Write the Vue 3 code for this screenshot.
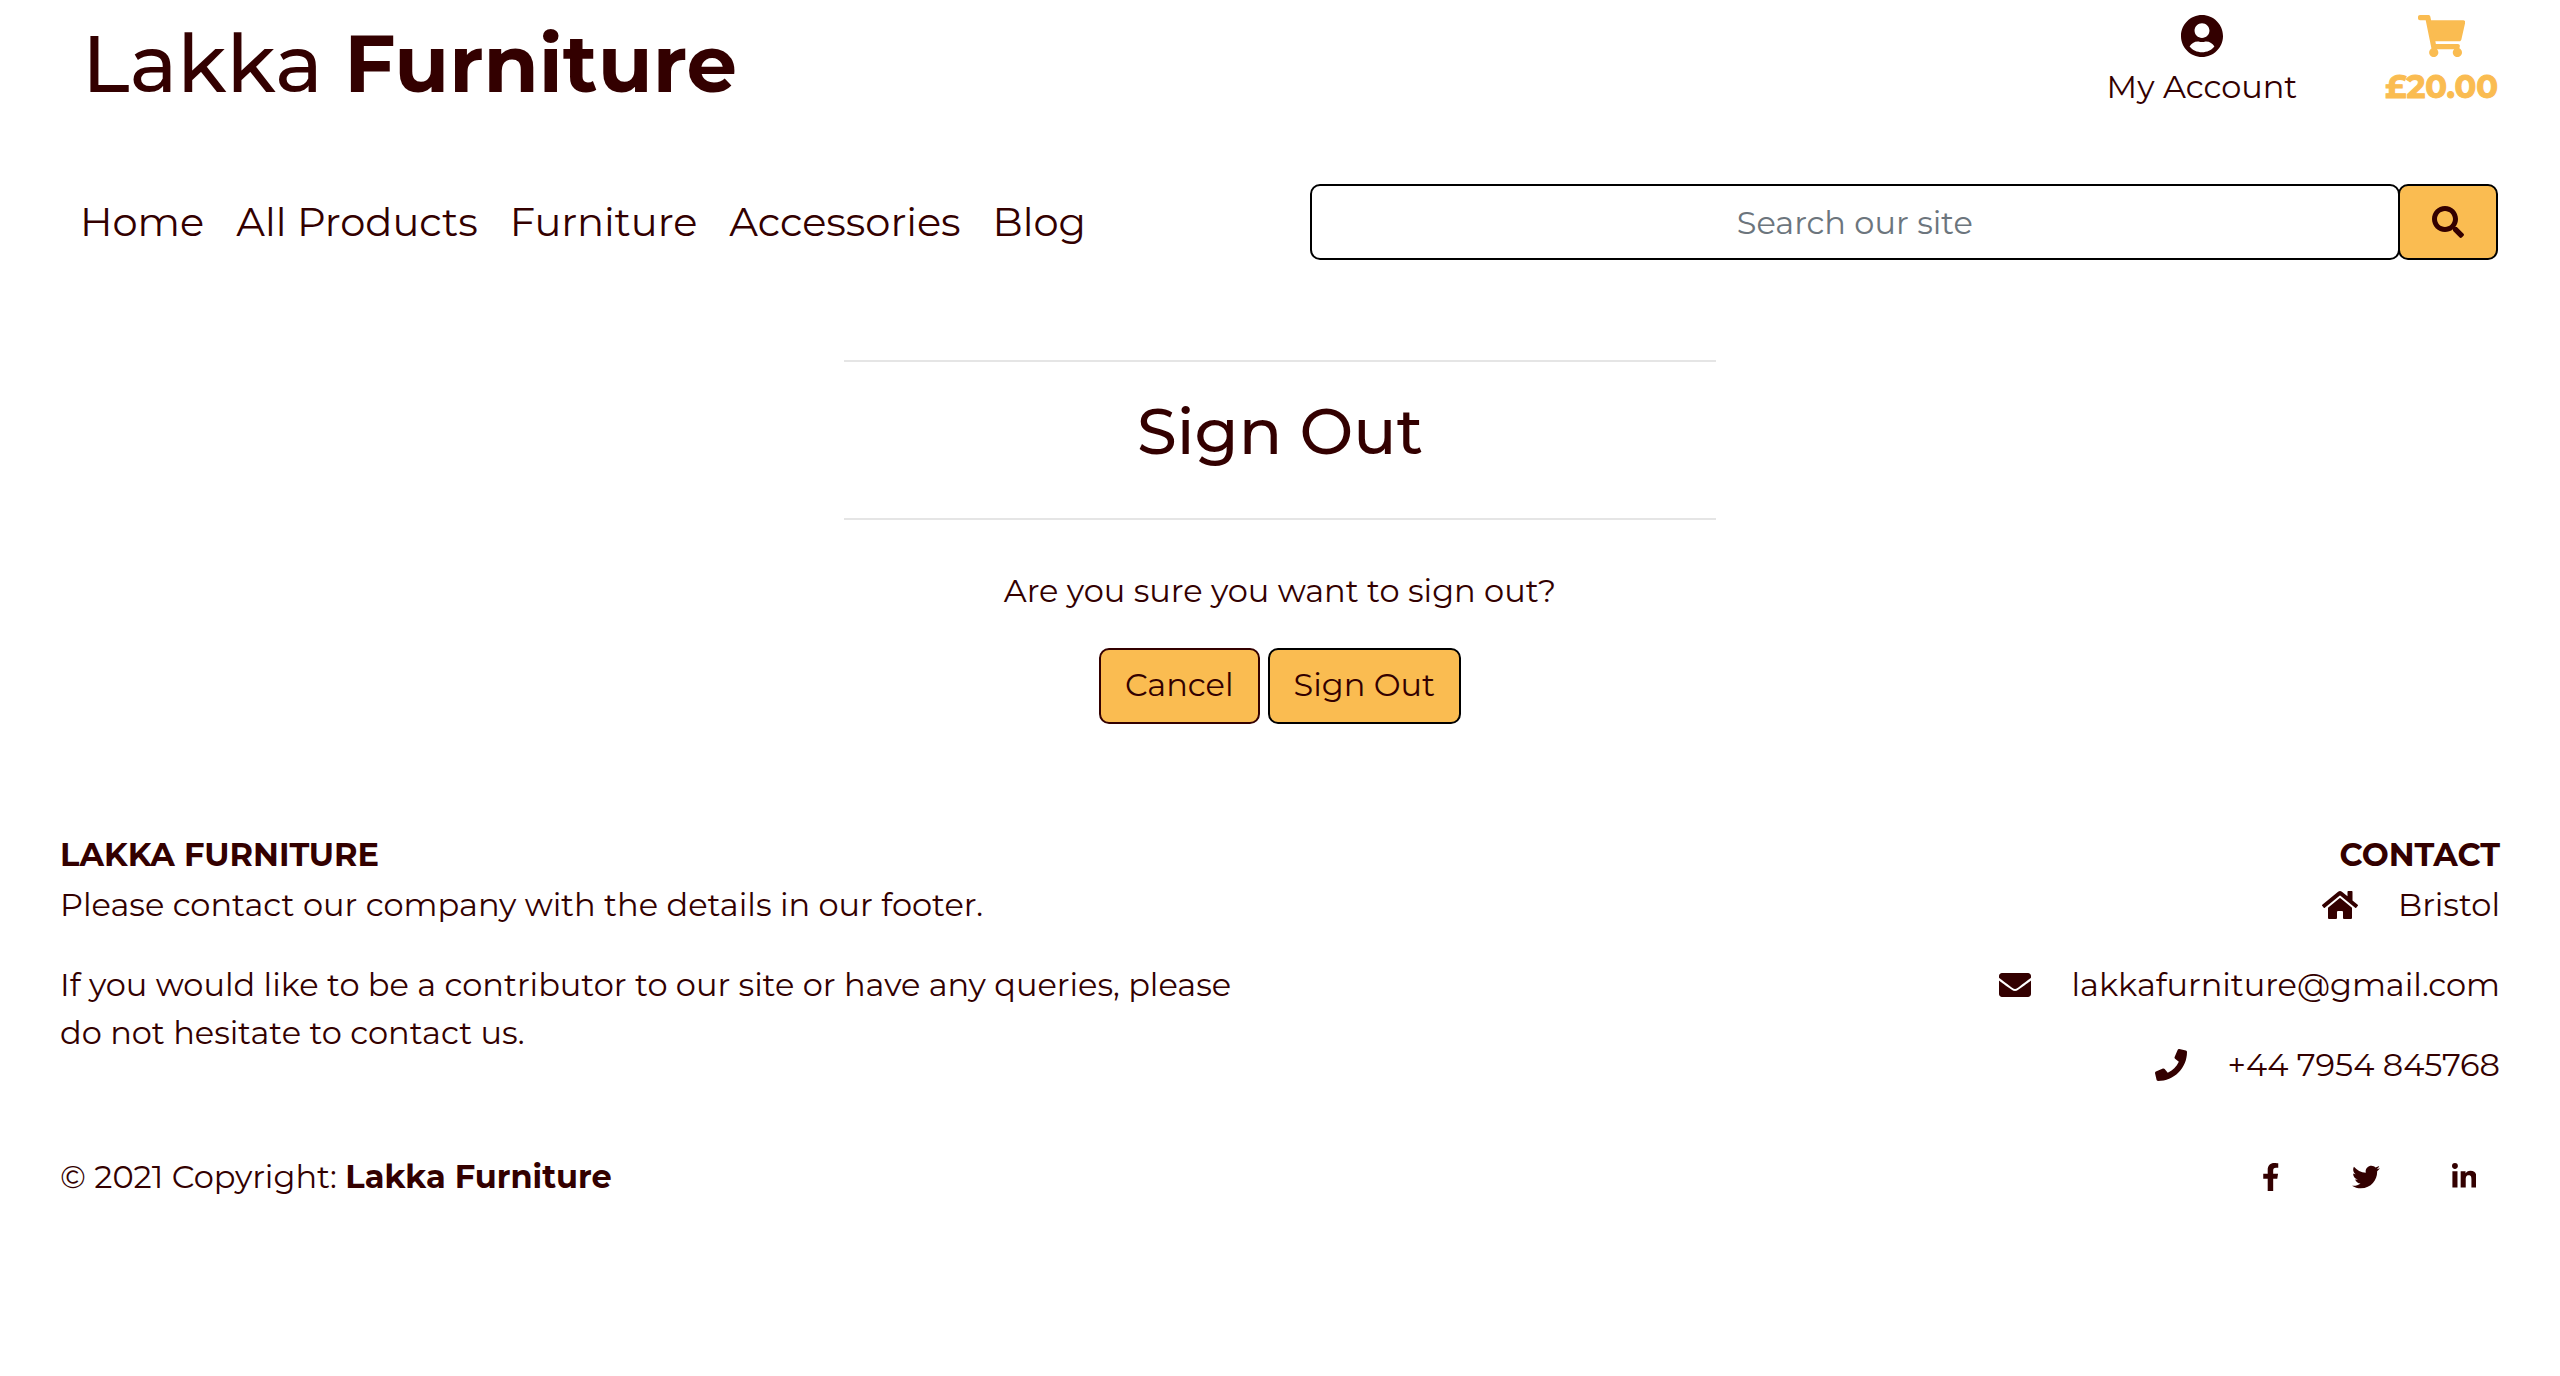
<script setup>
const navLinks = ['Home', 'All Products', 'Furniture', 'Accessories', 'Blog']

const contacts = [
  {
    name: 'home',
    text: 'Bristol',
    box: '0 0 576 512',
    path: 'M280.4 148.3L96 300.1V464a16 16 0 0 0 16 16l112.100-.3a16 16 0 0 0 15.900-16V368a16 16 0 0 1 16-16h64a16 16 0 0 1 16 16v95.600a16 16 0 0 0 16 16.100L464 480a16 16 0 0 0 16-16V300L295.700 148.300a12.200 12.200 0 0 0-15.300 0zM571.600 251.500L488 182.600V44.100a12 12 0 0 0-12-12h-56a12 12 0 0 0-12 12v72.600L318.500 43a48 48 0 0 0-61 0L4.300 251.500a12 12 0 0 0-1.600 16.900l25.500 31a12 12 0 0 0 16.900 1.600l235.200-193.700a12.200 12.200 0 0 1 15.300 0L530.900 301a12 12 0 0 0 16.900-1.600l25.500-31a12 12 0 0 0-1.700-16.900z'
  },
  {
    name: 'envelope',
    text: 'lakkafurniture@gmail.com',
    box: '0 0 512 512',
    path: 'M502.3 190.800c3.900-3.100 9.700-.2 9.700 4.700V400c0 26.500-21.500 48-48 48H48c-26.500 0-48-21.500-48-48V195.600c0-5 5.700-7.800 9.700-4.700 22.400 17.400 52.100 39.500 154.100 113.600 21.100 15.400 56.700 47.800 92.200 47.600 35.700.3 72-32.800 92.300-47.600 102-74.100 131.600-96.300 154-113.700zM256 320c23.200.4 56.600-29.200 73.400-41.400 132.700-96.300 142.800-104.700 173.400-128.700 5.800-4.500 9.200-11.500 9.200-18.900v-19c0-26.500-21.500-48-48-48H48c-26.500 0-48 21.500-48 48v19c0 7.400 3.400 14.300 9.200 18.900 30.600 23.900 40.700 32.400 173.400 128.700 16.800 12.200 50.200 41.800 73.400 41.400z'
  },
  {
    name: 'phone',
    text: '+44 7954 845768',
    box: '0 0 512 512',
    path: 'M493.400 24.600l-104-24c-11.300-2.600-22.900 3.300-27.500 13.900l-48 112c-4.200 9.800-1.400 21.300 6.900 28l60.600 49.600c-36 76.700-98.900 140.500-177.200 177.200l-49.600-60.600c-6.800-8.300-18.200-11.100-28-6.900l-112 48C3.900 366.500-2 378.100.6 389.400l24 104C27.100 504.200 36.700 512 48 512c256.100 0 464-207.500 464-464 0-11.200-7.700-20.900-18.600-23.400z'
  }
]

const socials = [
  {
    name: 'Facebook',
    box: '0 0 320 512',
    path: 'M279.140 288l14.220-92.660h-88.910v-60.130c0-25.350 12.420-50.060 52.240-50.060h40.420V6.260S260.430 0 225.360 0c-73.220 0-121.080 44.380-121.080 124.720v70.620H22.890V288h81.390v224h100.170V288z'
  },
  {
    name: 'Twitter',
    box: '0 0 512 512',
    path: 'M459.370 151.716c.325 4.548.325 9.097.325 13.645 0 138.720-105.583 298.558-298.558 298.558-59.452 0-114.680-17.219-161.137-47.106 8.447.974 16.568 1.299 25.340 1.299 49.055 0 94.213-16.568 130.274-44.832-46.132-.975-84.792-31.188-98.112-72.772 6.498.974 12.995 1.624 19.818 1.624 9.421 0 18.843-1.300 27.614-3.573-48.081-9.747-84.143-51.980-84.143-102.985v-1.299c13.969 7.797 30.214 12.670 47.431 13.319-28.264-18.843-46.781-51.005-46.781-87.391 0-19.492 5.197-37.360 14.294-52.954 51.655 63.675 129.300 105.258 216.365 109.807-1.624-7.797-2.599-15.918-2.599-24.040 0-57.828 46.782-104.934 104.934-104.934 30.213 0 57.502 12.670 76.670 33.137 23.715-4.548 46.456-13.320 66.599-25.340-7.798 24.366-24.366 44.833-46.132 57.827 21.117-2.273 41.584-8.122 60.426-16.243-14.292 20.791-32.161 39.308-52.628 54.253z'
  },
  {
    name: 'LinkedIn',
    box: '0 0 448 512',
    path: 'M100.280 448H7.400V148.900h92.880zM53.790 108.100C24.090 108.100 0 83.500 0 53.800a53.790 53.790 0 0 1 107.580 0c0 29.700-24.100 54.300-53.790 54.300zM447.900 448h-92.680V302.400c0-34.700-.7-79.200-48.290-79.200-48.290 0-55.690 37.700-55.690 76.700V448h-92.780V148.900h89.080v40.800h1.300c12.400-23.500 42.690-48.300 87.880-48.300 94 0 111.280 61.900 111.280 142.300V448z'
  }
]
</script>

<template>
  <div class="page">
    <header class="header">
      <div class="masthead">
        <a class="brand" href="#">Lakka <strong>Furniture</strong></a>
        <div class="shortcuts">
          <a class="shortcut" href="#">
            <svg class="shortcut-icon" viewBox="0 8 496 496" aria-hidden="true">
              <path d="M248 8C111 8 0 119 0 256s111 248 248 248 248-111 248-248S385 8 248 8zm0 96c48.600 0 88 39.400 88 88s-39.400 88-88 88-88-39.400-88-88 39.400-88 88-88zm0 344c-58.700 0-111.300-26.600-146.500-68.200 18.800-35.400 55.600-59.800 98.500-59.800 2.400 0 4.800.4 7.100 1.100 13 4.200 26.600 6.900 40.900 6.900 14.300 0 28-2.700 40.900-6.900 2.300-.7 4.700-1.100 7.100-1.100 42.900 0 79.700 24.400 98.500 59.800C359.300 421.400 306.700 448 248 448z" />
            </svg>
            <span>My Account</span>
          </a>
          <a class="shortcut basket" href="#">
            <svg class="shortcut-icon" viewBox="0 0 576 512" aria-hidden="true">
              <path d="M528.120 301.319l47.273-208C578.806 78.301 567.391 64 551.990 64H159.208l-9.166-44.810C147.758 8.021 137.930 0 126.529 0H24C10.745 0 0 10.745 0 24v16c0 13.255 10.745 24 24 24h69.883l70.248 343.435C147.325 417.100 136 435.222 136 456c0 30.928 25.072 56 56 56s56-25.072 56-56c0-15.674-6.447-29.835-16.824-40h209.647C430.447 426.165 424 440.326 424 456c0 30.928 25.072 56 56 56s56-25.072 56-56c0-22.172-12.888-41.332-31.579-50.405l5.517-24.276c3.413-15.018-8.002-29.319-23.403-29.319H218.117l-6.545-32h293.145c11.206 0 20.920-7.754 23.403-18.681z" />
            </svg>
            <span>£20.00</span>
          </a>
        </div>
      </div>
      <div class="toolbar">
        <nav class="nav">
          <a v-for="link in navLinks" :key="link" href="#">{{ link }}</a>
        </nav>
        <form class="search" @submit.prevent>
          <input type="text" placeholder="Search our site" aria-label="Search our site" />
          <button type="submit" aria-label="Search">
            <svg viewBox="0 0 512 512" aria-hidden="true">
              <path d="M505 442.700L405.300 343c-4.500-4.500-10.600-7-17-7H372c27.600-35.300 44-79.700 44-128C416 93.100 322.900 0 208 0S0 93.100 0 208s93.100 208 208 208c48.300 0 92.700-16.400 128-44v16.300c0 6.400 2.500 12.500 7 17l99.700 99.700c9.400 9.400 24.600 9.400 33.900 0l28.300-28.300c9.400-9.400 9.400-24.600.1-34zM208 336c-70.700 0-128-57.200-128-128 0-70.700 57.200-128 128-128 70.700 0 128 57.200 128 128 0 70.700-57.200 128-128 128z" />
            </svg>
          </button>
        </form>
      </div>
    </header>

    <main class="main">
      <hr />
      <h1>Sign Out</h1>
      <hr />
      <p>Are you sure you want to sign out?</p>
      <div class="actions">
        <a class="btn cancel" href="#">Cancel</a>
        <button class="btn" type="button">Sign Out</button>
      </div>
    </main>

    <footer class="footer">
      <div class="columns">
        <section class="about">
          <h2>LAKKA FURNITURE</h2>
          <p>Please contact our company with the details in our footer.</p>
          <p>If you would like to be a contributor to our site or have any queries, please do not hesitate to contact us.</p>
        </section>
        <section class="contact">
          <h2>CONTACT</h2>
          <p v-for="item in contacts" :key="item.name">
            <svg :class="item.name" :viewBox="item.box" aria-hidden="true"><path :d="item.path" /></svg>
            <span>{{ item.text }}</span>
          </p>
        </section>
      </div>
      <div class="legal">
        <p>© 2021 Copyright: <strong>Lakka Furniture</strong></p>
        <div class="socials">
          <a v-for="item in socials" :key="item.name" href="#" :aria-label="item.name">
            <svg :viewBox="item.box" aria-hidden="true"><path :d="item.path" /></svg>
          </a>
        </div>
      </div>
    </footer>
  </div>
</template>

<style>
body {
  margin: 0;
  background: #fff;
}
</style>

<style scoped>
.page {
  color: #300;
  font-family: Montserrat, Inter, "Noto Sans", sans-serif;
  font-size: 32px;
  line-height: 48px;
}
.page * {
  box-sizing: border-box;
}
a {
  color: inherit;
  text-decoration: none;
}
svg {
  display: block;
  fill: currentColor;
}
h1,
h2,
p {
  margin: 0;
}
.header {
  padding: 15px 62px 0 80px;
}
.masthead {
  display: flex;
  justify-content: space-between;
  align-items: flex-start;
}
.brand {
  padding-left: 2px;
  font-size: 80px;
  font-weight: 500;
  line-height: 98px;
}
.brand strong {
  font-weight: 700;
}
.shortcuts {
  display: flex;
  gap: 88px;
}
.shortcut {
  display: flex;
  flex-direction: column;
  align-items: center;
  gap: 6px;
}
.shortcut-icon {
  height: 42px;
}
.basket {
  color: #fabc51;
  font-weight: 700;
}
.basket span {
  -webkit-text-stroke: 1px currentColor;
}
.toolbar {
  display: flex;
  justify-content: space-between;
  align-items: center;
  margin-top: 71px;
}
.nav {
  display: flex;
  gap: 32px;
  font-size: 40px;
}
.search {
  display: flex;
  flex: 0 0 49.15%;
}
.search input {
  flex: 1;
  min-width: 0;
  height: 76px;
  padding: 0 24px;
  border: 2px solid #000;
  border-radius: 10px;
  background: #fff;
  color: #300;
  font: inherit;
  text-align: center;
}
.search input::placeholder {
  color: #6c757d;
  opacity: 1;
}
.search button {
  display: grid;
  place-items: center;
  width: 100px;
  margin-left: -2px;
  padding: 0;
  border: 2px solid #000;
  border-radius: 10px;
  background: #fabc51;
  color: #300;
}
.search svg {
  width: 32px;
  height: 32px;
}
.main {
  width: 34.1%;
  margin: 100px auto 0;
  text-align: center;
}
hr {
  margin: 0;
  border: 0;
  border-top: 2px solid #e5e5e5;
}
h1 {
  padding: 31px 0 49px;
  font-size: 64px;
  font-weight: 500;
  line-height: 76px;
}
.main p {
  margin-top: 47px;
}
.actions {
  display: flex;
  justify-content: center;
  gap: 8px;
  margin-top: 33px;
}
.btn {
  height: 76px;
  padding: 11px 24px 13px;
  border: 2px solid #000;
  border-radius: 10px;
  background: #fabc51;
  color: #300;
  font: inherit;
}
.cancel {
  border-color: #300;
}
.footer {
  margin-top: 107px;
  padding: 0 60px;
}
.columns {
  display: flex;
  justify-content: space-between;
}
.about {
  width: 50%;
}
h2 {
  margin-bottom: 2px;
  font-size: 32px;
  font-weight: 700;
  line-height: 48px;
}
.columns p + p {
  margin-top: 32px;
}
.contact p {
  display: flex;
  justify-content: flex-end;
  align-items: center;
  gap: 40px;
}
.contact h2 {
  text-align: right;
}
.contact svg {
  height: 32px;
}
.legal {
  display: flex;
  justify-content: space-between;
  align-items: center;
  margin-top: 64px;
}
.socials {
  display: flex;
  gap: 72px;
  padding-right: 24px;
}
.socials svg {
  height: 28px;
}
</style>
